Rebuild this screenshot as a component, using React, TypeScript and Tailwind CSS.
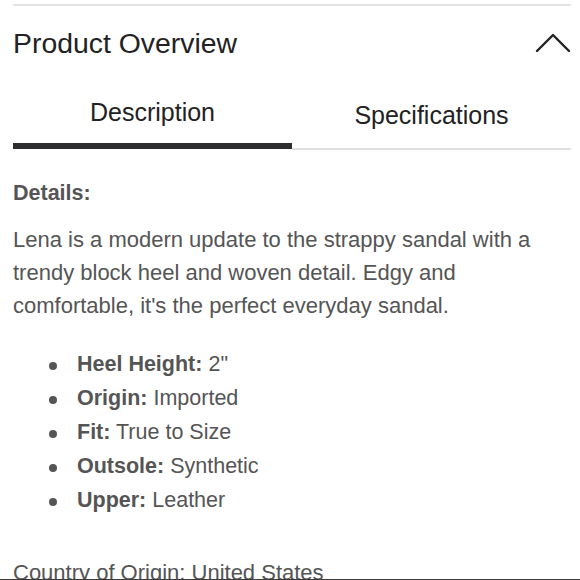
import React from 'react'

interface Spec {
	label: string,
	value: string,
}

const specs: Spec[] = [
	{ label: 'Heel Height:', value: '2"' },
	{ label: 'Origin:', value: 'Imported' },
	{ label: 'Fit:', value: 'True to Size' },
	{ label: 'Outsole:', value: 'Synthetic' },
	{ label: 'Upper:', value: 'Leather' },
]

function ChevronUp() {
	return (
		<svg width="36" height="20" viewBox="0 0 36 20" fill="none">
			<polyline points="2,18 18,2 34,18" stroke="#222" strokeWidth="2.4" strokeLinecap="round" strokeLinejoin="round" />
		</svg>
	)
}

export default function App() {
	const [tab, setTab] = React.useState<'description' | 'specifications'>('description')

	return (
		<div className="w-[580px] h-[580px] overflow-hidden bg-white border-b border-[#3a3a3a] font-['Liberation_Sans',Arial,sans-serif]">
			<div className="ml-[13px] mr-[9px] pt-[4px]">
				<div className="h-[2px] bg-[#e3e3e3]"></div>

				<div className="mt-[23px] h-[28px] flex items-center justify-between">
					<h2 className="text-[28.4px] leading-[28px] text-[#222]">Product Overview</h2>
					<ChevronUp/>
				</div>

				<div className="flex">
					<button onClick={() => setTab('description')} className="flex-1 flex flex-col items-stretch pt-[43px]">
						<span className="text-[25px] leading-[25px] text-[#222] text-center">Description</span>
						<span className={`mt-[18px] h-[6px] ${tab === 'description' ? 'bg-[#2e2e30]' : 'bg-transparent'}`}></span>
						<span className="h-[1px]"></span>
					</button>
					<button onClick={() => setTab('specifications')} className="flex-1 flex flex-col items-stretch pt-[46px]">
						<span className="text-[25px] leading-[25px] text-[#222] text-center">Specifications</span>
						<span className="mt-[20px] h-[2px] bg-[#e0e0e0]"></span>
					</button>
				</div>

				<div className="text-[#555] text-[21.5px]">
					<p className="mt-[31px] font-bold leading-[24px]">Details:</p>
					<p className="mt-[18px] text-[22px] leading-[33px]">
						Lena is a modern update to the strappy sandal with a trendy block heel and woven detail. Edgy and comfortable, it's the perfect everyday sandal.
					</p>
					<ul className="mt-[25px]">
						{specs.map((s) => (
							<li key={s.label} className="flex items-start leading-[34px]">
								<span className="ml-[36px] mt-[15px] w-[8px] h-[8px] rounded-full bg-[#555] shrink-0"></span>
								<span className="ml-[20px]"><b>{s.label}</b> {s.value}</span>
							</li>
						))}
					</ul>
					<p className="mt-[39px] text-[22px] leading-[34px]">Country of Origin: United States</p>
				</div>
			</div>
		</div>
	)
}
